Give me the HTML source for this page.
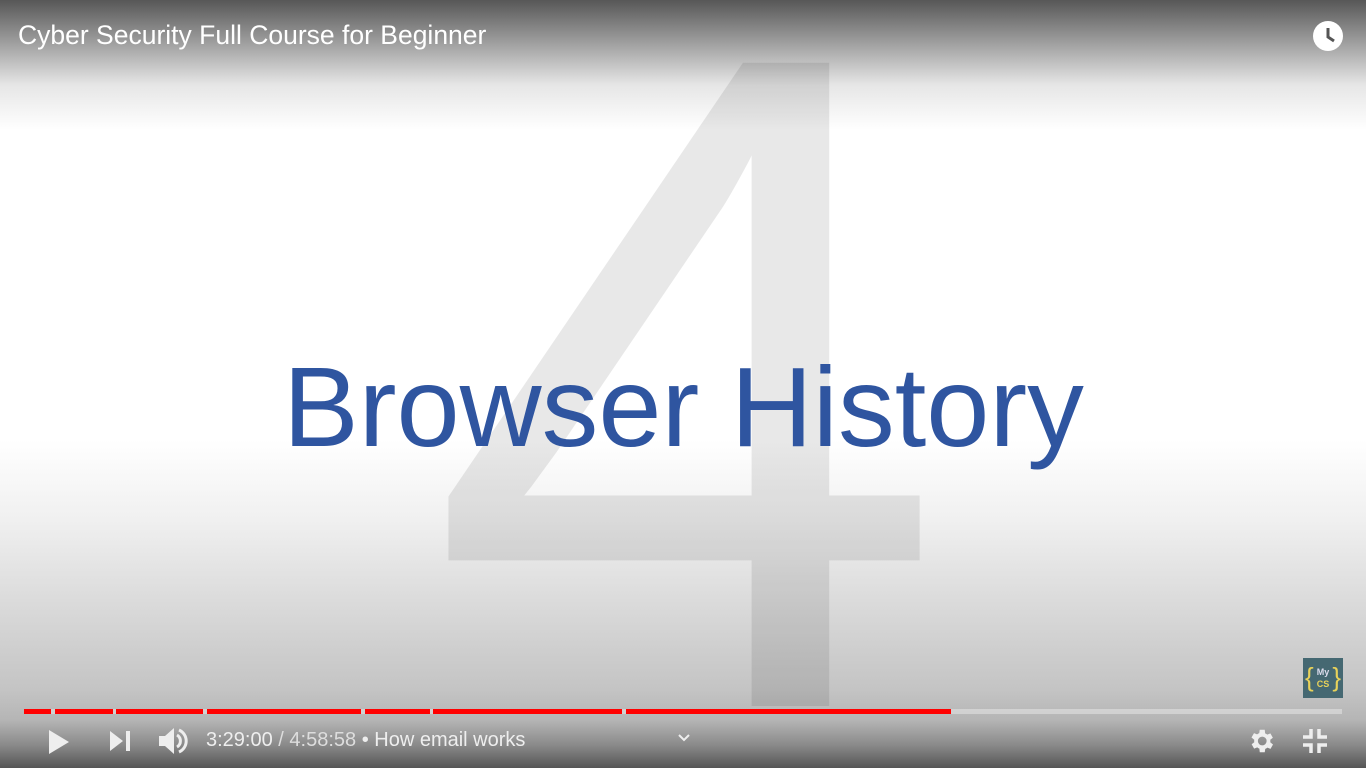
<!DOCTYPE html><html style="margin:0;width:1366px;height:768px;overflow:hidden;background:#fff"><head><style>
body{margin:0;width:1366px;height:768px;overflow:hidden;position:relative;font-family:"Liberation Sans",sans-serif;}
.wrap{position:absolute;left:0;top:0;width:1366px;height:768px;overflow:hidden;
background:linear-gradient(to bottom,#575757 0px,#9a9a9a 40px,#e6e6e6 85px,#fff 130px,#fff 440px,#f0f0f0 520px,#d6d6d6 620px,#c4c4c4 690px,#b5b5b5 720px,#8a8a8a 745px,#555 768px);}
.t{position:absolute;left:18px;top:20px;color:#fff;font-size:26.5px;}
.four{position:absolute;left:427px;top:-84px;font-size:935px;line-height:1;color:rgba(0,0,0,0.09);}
.bh{position:absolute;left:283px;top:342px;font-size:113.5px;color:#2f55a0;white-space:nowrap;}
.bar{position:absolute;top:709px;height:5px;background:#f00}
.ctl{position:absolute;color:#eee;font-size:20px;top:729px;left:206px}
</style></head><body><div class="wrap">
<div class="four">4</div>
<div class="bh">Browser History</div>
<div class="t">Cyber Security Full Course for Beginner</div>
<svg style="position:absolute;left:1312px;top:20px" width="32" height="32"><circle cx="16" cy="16" r="15" fill="#fff"/><path d="M16 8v9l6 4" stroke="#555" stroke-width="3" fill="none"/></svg>
<div style="position:absolute;left:24px;top:709px;width:1318px;height:5px;background:rgba(255,255,255,0.35)"></div>
<div class="bar" style="left:24px;width:27px"></div>
<div class="bar" style="left:55px;width:58px"></div>
<div class="bar" style="left:116px;width:87px"></div>
<div class="bar" style="left:207px;width:154px"></div>
<div class="bar" style="left:365px;width:65px"></div>
<div class="bar" style="left:433px;width:189px"></div>
<div class="bar" style="left:626px;width:325px"></div>
<div style="position:absolute;left:1303px;top:658px;width:40px;height:40px;background:#456872;color:#e8d25a;font-size:9px;font-weight:bold;text-align:center;line-height:12px">
<span style="position:absolute;left:2px;top:6px;font-size:26px;font-weight:normal;line-height:26px">{</span><span style="position:absolute;right:2px;top:6px;font-size:26px;font-weight:normal;line-height:26px">}</span><div style="color:#dde;padding-top:8px">My</div><div>CS</div></div>
<svg style="position:absolute;left:48px;top:729px" width="24" height="26"><path d="M1 1L21 13L1 25Z" fill="#eee"/></svg>
<svg style="position:absolute;left:110px;top:731px" width="22" height="20"><path d="M0 0L13 10L0 20Z" fill="#eee"/><rect x="16" y="0" width="4" height="20" fill="#eee"/></svg>
<svg style="position:absolute;left:157px;top:726px" width="32" height="30"><path d="M2 10h6l9-8v26l-9-8H2Z" fill="#eee"/><path d="M20 9a7 7 0 0 1 0 12M22 4a12 12 0 0 1 0 22" stroke="#eee" stroke-width="3" fill="none"/></svg>
<div class="ctl">3:29:00 <span style="color:#ddd">/ 4:58:58</span> • How email works</div>
<svg style="position:absolute;left:677px;top:733px" width="14" height="10"><path d="M2 2l5 5 5-5" stroke="#eee" stroke-width="2" fill="none"/></svg>
<svg style="position:absolute;left:1246px;top:726px" width="30" height="30" viewBox="0 0 24 24"><path fill="#eee" d="M19.4 13a7.5 7.5 0 0 0 0-2l2.1-1.6-2-3.5-2.5 1a7.3 7.3 0 0 0-1.7-1L15 3h-4l-.4 2.7a7.3 7.3 0 0 0-1.7 1l-2.5-1-2 3.5L6.6 11a7.5 7.5 0 0 0 0 2l-2.1 1.6 2 3.5 2.5-1a7.3 7.3 0 0 0 1.7 1L11 21h4l.4-2.7a7.3 7.3 0 0 0 1.7-1l2.5 1 2-3.5ZM13 15.5a3.5 3.5 0 1 1 0-7 3.5 3.5 0 0 1 0 7Z"/></svg>
<svg style="position:absolute;left:1302px;top:728px" width="26" height="26"><path d="M9 1v8H1M17 1v8h8M9 25v-8H1M17 25v-8h8" stroke="#eee" stroke-width="3.5" fill="none"/></svg>
</div></body></html>
